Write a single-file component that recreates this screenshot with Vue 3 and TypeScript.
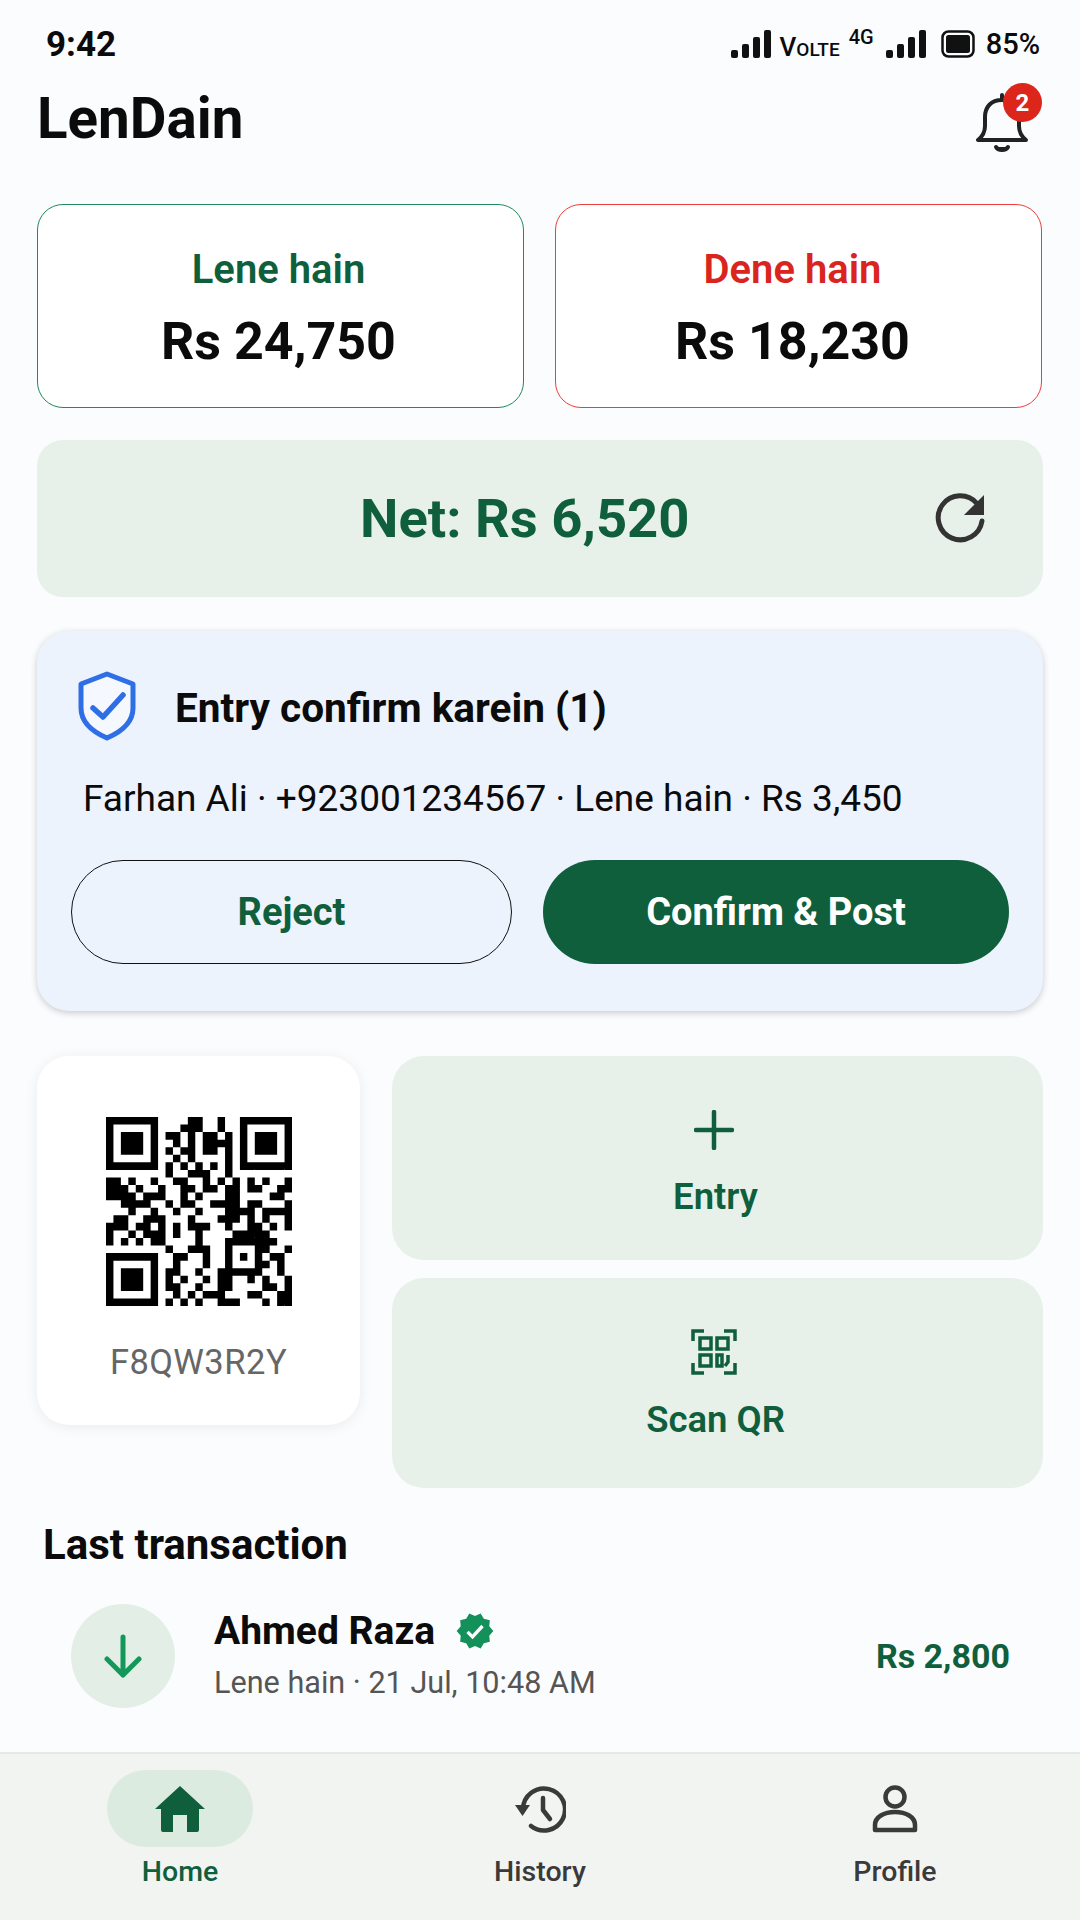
<template>
  <div class="phone">
    <div class="status-bar">
      <span class="time">9:42</span>
      <div class="status-right">
        <svg class="signal" width="40" height="28" viewBox="0 0 40 28"><rect x="0" y="20" width="7" height="8" rx="2" /><rect x="11" y="14" width="7" height="14" rx="2" /><rect x="22" y="7" width="7" height="21" rx="2" /><rect x="33" y="0" width="7" height="28" rx="2" /></svg>
        <span class="volte">V<small>OLTE</small></span>
        <span class="four-g">4G</span>
        <svg class="signal" width="40" height="28" viewBox="0 0 40 28"><rect x="0" y="20" width="7" height="8" rx="2" /><rect x="11" y="14" width="7" height="14" rx="2" /><rect x="22" y="7" width="7" height="21" rx="2" /><rect x="33" y="0" width="7" height="28" rx="2" /></svg>
        <svg class="battery" width="34" height="28" viewBox="0 0 34 28"><rect x="1.5" y="1.5" width="31" height="25" rx="6" fill="none" stroke="#111" stroke-width="2.5" /><rect x="5" y="5" width="24" height="18" rx="2.5" fill="#111" /></svg>
        <span class="pct">85%</span>
      </div>
    </div>

    <header class="app-header">
      <h1>LenDain</h1>
      <div class="bell">
        <svg width="52" height="62" viewBox="0 0 52 62" fill="none" stroke="#222" stroke-width="4" stroke-linejoin="round" stroke-linecap="round">
          <path d="M26 4v5M2 49h48c-5-4-7-9-7-14V26c0-10-6-17-17-17S9 16 9 26v9c0 5-2 10-7 14Z" />
          <path d="M20 56c2 4 10 4 12 0" fill="#222" />
        </svg>
        <span class="badge">2</span>
      </div>
    </header>

    <main class="content">
      <section class="totals">
        <div class="total-card lene">
          <div class="total-label">Lene hain</div>
          <div class="total-value">Rs 24,750</div>
        </div>
        <div class="total-card dene">
          <div class="total-label">Dene hain</div>
          <div class="total-value">Rs 18,230</div>
        </div>
      </section>

      <section class="net">
        <span class="net-text">Net: Rs 6,520</span>
        <svg class="net-refresh" width="52" height="52" viewBox="0 0 52 52" fill="none">
          <path d="M42 11.5A22 22 0 1 0 47 29" stroke="#333" stroke-width="5" stroke-linecap="round" />
          <path d="M49 3v20H29Z" fill="#333" />
        </svg>
      </section>

      <section class="confirm">
        <div class="confirm-head">
          <svg width="58" height="70" viewBox="0 0 58 70" fill="none" stroke="#2f6fe6" stroke-linejoin="round" stroke-linecap="round">
            <path d="M29 3 55 13v24c0 14-12 24-26 30C15 61 3 51 3 37V13Z" stroke-width="5" fill="#f5f8fe" />
            <path d="M15 37l10 9 20-22" stroke-width="5.500" />
          </svg>
          <h2>Entry confirm karein (1)</h2>
        </div>
        <p class="confirm-detail">Farhan Ali · +923001234567 · Lene hain · Rs 3,450</p>
        <div class="confirm-actions">
          <button class="btn-reject">Reject</button>
          <button class="btn-post">Confirm &amp; Post</button>
        </div>
      </section>

      <section class="actions">
        <div class="qr-card">
          <svg class="qr" width="186" height="189" viewBox="0 0 25 25" preserveAspectRatio="none"><path :d="qrPath" fill="#000" /></svg>
          <div class="qr-code">F8QW3R2Y</div>
        </div>
        <div class="action-col">
          <button class="action-btn entry">
            <svg width="40" height="40" viewBox="0 0 40 40" stroke="#0f5f3c" stroke-width="4.5" stroke-linecap="round"><path d="M20 2v36M2 20h36" /></svg>
            <span>Entry</span>
          </button>
          <button class="action-btn scan">
            <svg width="46" height="46" viewBox="0 0 46 46" fill="none" stroke="#0f5f3c" stroke-width="3.5">
              <path d="M13 2H2v10M33 2h11v10M2 34v10h11M44 34v10H33" />
              <rect x="9" y="9" width="11" height="11" />
              <rect x="26" y="9" width="11" height="11" />
              <rect x="9" y="26" width="11" height="11" />
              <path d="M26 26h5v11h-5ZM37 26v7l-3 4" />
            </svg>
            <span>Scan QR</span>
          </button>
        </div>
      </section>

      <h3 class="last-title">Last transaction</h3>
      <section class="tx-row">
        <div class="tx-icon">
          <svg width="38" height="44" viewBox="0 0 38 44" fill="none" stroke="#14985a" stroke-width="5" stroke-linecap="round" stroke-linejoin="round"><path d="M19 3v38M3 25l16 16 16-16" /></svg>
        </div>
        <div class="tx-info">
          <div class="tx-name">
            <span>Ahmed Raza</span>
            <svg width="40" height="40" viewBox="0 0 24 24"><path fill="#14905a" d="M23 12l-2.44-2.79.34-3.69-3.61-.82-1.89-3.2L12 2.96 8.6 1.5 6.71 4.69 3.1 5.5l.34 3.7L1 12l2.44 2.79-.34 3.7 3.61.82L8.6 22.5l3.4-1.47 3.4 1.46 1.89-3.19 3.61-.82-.34-3.69L23 12z" /><path d="M7.5 12.5l3 3 6-6.5" fill="none" stroke="#fff" stroke-width="2" /></svg>
          </div>
          <div class="tx-sub">Lene hain · 21 Jul, 10:48 AM</div>
        </div>
        <div class="tx-amount">Rs 2,800</div>
      </section>
    </main>

    <nav class="bottom-nav">
      <div v-for="item in navItems" :key="item.label" class="nav-item" :class="{ active: item.active }">
        <div class="nav-icon">
          <svg v-if="item.label === 'Home'" width="52" height="48" viewBox="0 0 52 48"><path fill="#0f5f3c" d="M26 1 51 24h-6v21a2 2 0 0 1-2 2H33V30H19v17H9a2 2 0 0 1-2-2V24H1Z" /></svg>
          <svg v-else-if="item.label === 'History'" width="52" height="50" viewBox="0 0 52 50" fill="none" stroke="#3a3a3a" stroke-width="4.5" stroke-linecap="round">
            <path d="M9 25a21 21 0 1 1 8 17" />
            <path d="M29 14v12l7 9" stroke-linejoin="round" />
            <path d="M1 21h15L8.500 32Z" fill="#3a3a3a" stroke="none" />
          </svg>
          <svg v-else width="46" height="48" viewBox="0 0 46 48" fill="none" stroke="#3a3a3a" stroke-width="4.5" stroke-linejoin="round">
            <circle cx="23" cy="12" r="9.500" />
            <path d="M3 45v-5c0-8 9-13 20-13s20 5 20 13v5Z" />
          </svg>
        </div>
        <span class="nav-label">{{ item.label }}</span>
      </div>
    </nav>
  </div>
</template>

<script setup lang="ts">
import { computed } from 'vue'

const navItems = [
  { label: 'Home', active: true },
  { label: 'History', active: false },
  { label: 'Profile', active: false },
]

const qrRows = [
  '1111111000011001001111111',
  '1000001000111001001000001',
  '1011101011010110101011101',
  '1011101001010111101011101',
  '1011101010110110101011101',
  '1000001001010000101000001',
  '1111111010101010101111111',
  '0000000010011100100000000',
  '1101001001100101010101001',
  '1110100100110110110110011',
  '1111011100101000110000110',
  '0011110010110011110110001',
  '0001001001001000111101111',
  '0110011100010001110101001',
  '1110110101011100100110101',
  '1001011101001000011111000',
  '1010101100001000111111100',
  '0000000010011100100011001',
  '1111111001100100101010110',
  '1000001001000100100011010',
  '1011101011001001111110010',
  '1011101010100101100101001',
  '1011101011001001100001101',
  '1000001001010111000110011',
  '1111111010101001110001011',
]

const qrPath = computed(() => {
  let d = ''
  qrRows.forEach((row, y) => {
    row.split('').forEach((cell, x) => {
      if (cell === '1') d += `M${x} ${y}h1v1h-1z`
    })
  })
  return d
})
</script>

<style>
body {
  background: #fbfcfd;
}
</style>

<style scoped>
.phone {
  width: 1080px;
  height: 1920px;
  display: flex;
  flex-direction: column;
  background: #fbfcfd;
  color: #0b0b0b;
  font-family: Roboto, "Noto Sans", sans-serif;
  overflow: hidden;
}

.status-bar {
  height: 88px;
  padding: 0 40px 0 46px;
  display: flex;
  justify-content: space-between;
  align-items: center;
  box-sizing: border-box;
}

.time {
  font-size: 35px;
  font-weight: 700;
}

.status-right {
  display: flex;
  align-items: center;
  font-weight: 700;
}

.signal {
  fill: #111;
}

.volte {
  margin-left: 9px;
  font-size: 26px;
  font-weight: 500;
  margin-top: 6px;
}

.volte small {
  font-size: 19px;
}

.four-g {
  font-size: 20px;
  font-weight: 500;
  margin: -14px 12px 0 9px;
}

.battery {
  margin-left: 15px;
}

.pct {
  font-size: 29px;
  font-weight: 500;
  margin-left: 11px;
}

.app-header {
  height: 60px;
  margin-bottom: 56px;
  padding: 0 52px 0 37px;
  display: flex;
  justify-content: space-between;
  align-items: center;
}

.app-header h1 {
  margin: 2px 0 0;
  font-size: 56.5px;
  font-weight: 700;
}

.bell {
  position: relative;
  height: 62px;
  margin-top: 8px;
}

.badge {
  position: absolute;
  top: -8px;
  right: -14px;
  width: 39px;
  height: 39px;
  border-radius: 50%;
  background: #dc261c;
  color: #fff;
  font-size: 24px;
  font-weight: 700;
  display: flex;
  align-items: center;
  justify-content: center;
}

.content {
  flex: 1;
  padding: 0 37px;
  display: flex;
  flex-direction: column;
}

.totals {
  display: grid;
  grid-template-columns: 487px 487px;
  gap: 31px;
}

.total-card {
  height: 204px;
  box-sizing: border-box;
  padding: 6px 4px 0 0;
  background: #fff;
  border-radius: 26px;
  border: 1.5px solid #1f8a5c;
  display: flex;
  flex-direction: column;
  align-items: center;
  justify-content: center;
  gap: 18px;
}

.total-card.dene {
  padding-right: 12px;
  border-color: #ec3f3a;
}

.total-label {
  font-size: 40px;
  line-height: 47px;
  font-weight: 600;
  color: #0f5f3c;
}

.dene .total-label {
  color: #d9251d;
}

.total-value {
  font-size: 52px;
  line-height: 61px;
  font-weight: 700;
}

.net {
  position: relative;
  height: 157px;
  margin-top: 32px;
  background: #e7f1e9;
  border-radius: 26px;
  display: flex;
  align-items: center;
  padding-left: 323px;
}

.net-text {
  font-size: 54.4px;
  font-weight: 700;
  color: #0f5f3c;
}

.net-refresh {
  position: absolute;
  right: 56px;
  top: 52px;
}

.confirm {
  height: 380px;
  box-sizing: border-box;
  margin-top: 34px;
  padding: 40px 34px 0;
  background: #edf3fd;
  border-radius: 32px;
  box-shadow: 0 2px 7px rgba(0, 0, 0, 0.2);
}

.confirm-head {
  display: flex;
  align-items: center;
  gap: 39px;
  padding-left: 7px;
}

.confirm-head h2 {
  margin: 4px 0 0;
  font-size: 40.6px;
  font-weight: 700;
}

.confirm-detail {
  margin: 35px 0 0 12px;
  font-size: 37px;
  line-height: 46px;
}

.confirm-actions {
  margin-top: 38px;
  display: flex;
  gap: 31px;
}

.confirm-actions button {
  height: 104px;
  border-radius: 52px;
  font-family: inherit;
  font-size: 38px;
  font-weight: 700;
}

.btn-reject {
  width: 441px;
  border: 1.5px solid #111;
  background: transparent;
  color: #0f5f3c;
}

.btn-post {
  width: 466px;
  border: none;
  background: #0f5f3c;
  color: #fff;
}

.actions {
  margin-top: 45px;
  display: flex;
  align-items: flex-start;
  gap: 32px;
}

.qr-card {
  width: 323px;
  height: 369px;
  background: #fff;
  border-radius: 32px;
  box-shadow: 0 2px 14px rgba(0, 0, 0, 0.07);
  display: flex;
  flex-direction: column;
  align-items: center;
  padding-top: 61px;
  box-sizing: border-box;
}

.qr-code {
  margin-top: 36px;
  font-size: 34.5px;
  color: #666;
  letter-spacing: 0.5px;
}

.action-col {
  flex: 1;
  display: flex;
  flex-direction: column;
  gap: 18px;
}

.action-btn {
  border: none;
  background: #e7f1e9;
  border-radius: 32px;
  color: #0f5f3c;
  font-family: inherit;
  font-size: 36.5px;
  font-weight: 600;
  display: flex;
  flex-direction: column;
  align-items: center;
  padding-right: 10px;
}

.action-btn svg {
  margin-right: 3px;
}

.action-btn.entry {
  height: 204px;
  padding-top: 54px;
  gap: 25px;
}

.action-btn.scan {
  height: 210px;
  padding-top: 51px;
  gap: 23px;
}

.last-title {
  margin: 35px 0 0 6px;
  font-size: 42px;
  line-height: 44px;
  font-weight: 700;
}

.tx-row {
  margin-top: 37px;
  padding: 0 33px 0 34px;
  display: flex;
  align-items: center;
}

.tx-icon {
  width: 104px;
  height: 104px;
  border-radius: 50%;
  background: #e3efe6;
  display: flex;
  align-items: center;
  justify-content: center;
}

.tx-info {
  flex: 1;
  margin-left: 39px;
  padding-bottom: 5px;
}

.tx-name {
  display: flex;
  align-items: center;
  gap: 20px;
  font-size: 39px;
  font-weight: 700;
  height: 48px;
}

.tx-sub {
  margin-top: 10px;
  font-size: 30.6px;
  color: #555;
}

.tx-amount {
  font-size: 34px;
  font-weight: 700;
  color: #0f5f3c;
}

.bottom-nav {
  height: 168px;
  box-sizing: border-box;
  border-top: 2px solid #e6e8e7;
  background: #f2f4f2;
  display: grid;
  grid-template-columns: 360px 360px 350px;
  padding-top: 16px;
}

.nav-item {
  display: flex;
  flex-direction: column;
  align-items: center;
  color: #3a3a3a;
}

.nav-icon {
  width: 146px;
  height: 77px;
  border-radius: 39px;
  display: flex;
  align-items: center;
  justify-content: center;
}

.nav-item.active .nav-icon {
  background: #dcebdf;
}

.nav-item.active {
  color: #0f5f3c;
}

.nav-label {
  margin-top: 8px;
  font-size: 28.5px;
  font-weight: 500;
}
</style>
